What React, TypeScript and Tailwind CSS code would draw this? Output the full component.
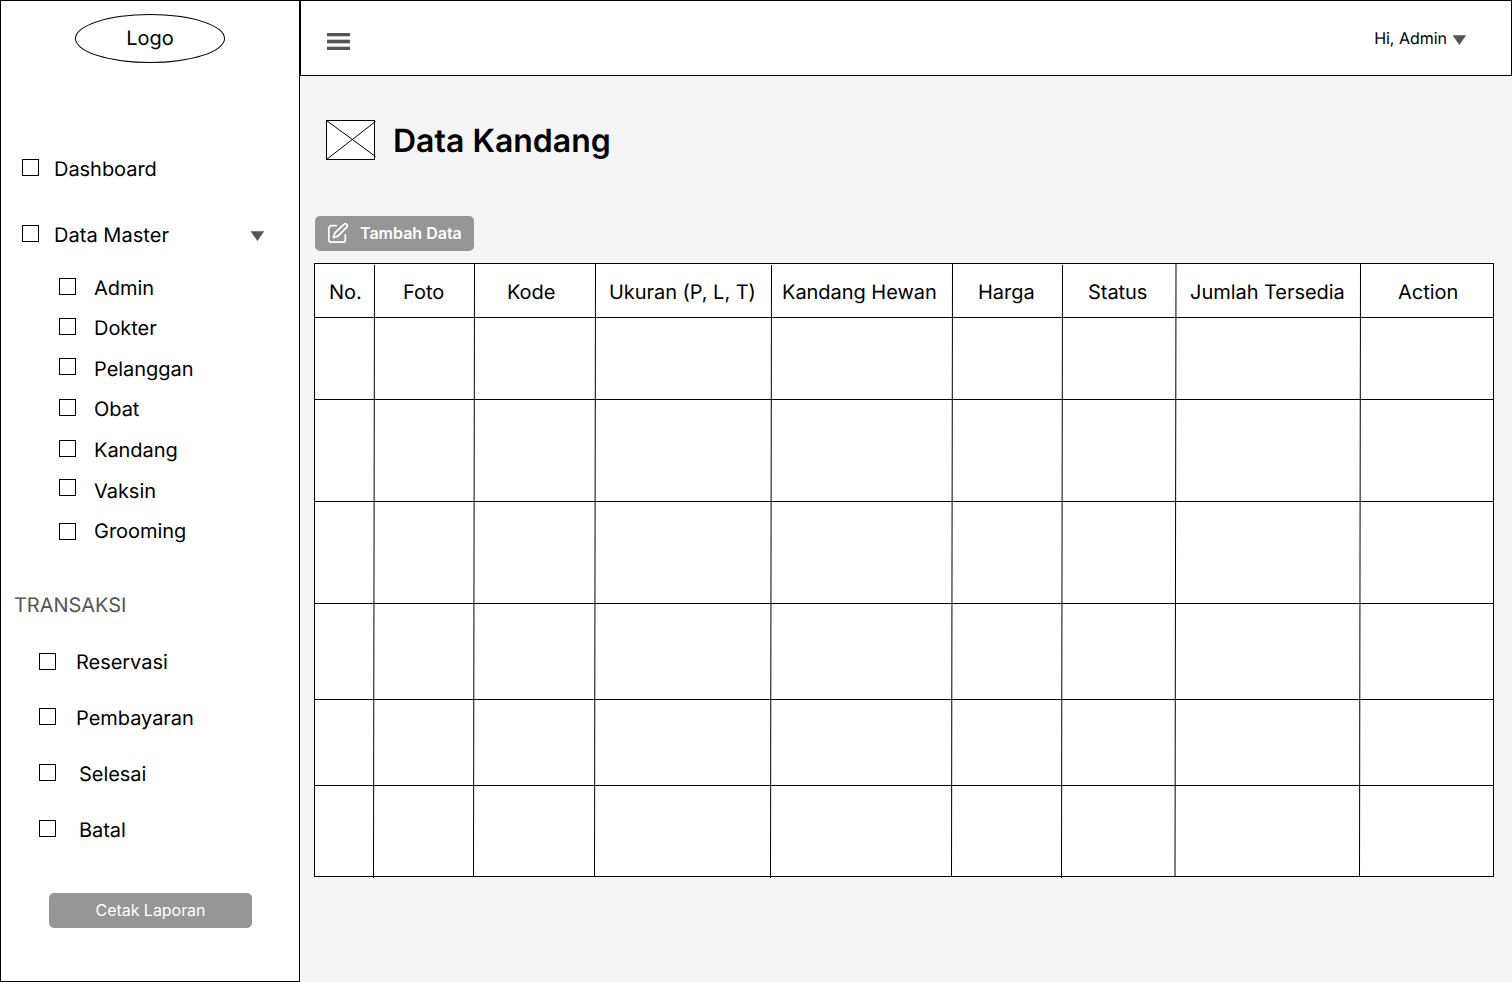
type Item = { label: string; row: string; box: string };

const masterItems: Item[] = [
  { label: "Admin", row: "h-10", box: "mt-0.5" },
  { label: "Dokter", row: "h-[41px]", box: "mt-0.5" },
  { label: "Pelanggan", row: "h-10", box: "mt-px" },
  { label: "Obat", row: "h-[41px]", box: "mt-0.5" },
  { label: "Kandang", row: "h-[41px]", box: "mt-0.5" },
  { label: "Vaksin", row: "h-10", box: "mt-0" },
  { label: "Grooming", row: "h-6", box: "mt-1" },
];

const transactionItems: Item[] = [
  { label: "Reservasi", row: "gap-5", box: "mt-[3px]" },
  { label: "Pembayaran", row: "gap-5", box: "mt-0.5" },
  { label: "Selesai", row: "gap-[23px]", box: "mt-0.5" },
  { label: "Batal", row: "gap-[23px]", box: "mt-0.5" },
];

const columns = [
  { label: "No.", pad: "pl-[14px]" },
  { label: "Foto", pad: "pl-7" },
  { label: "Kode", pad: "pl-8" },
  { label: "Ukuran (P, L, T)", pad: "pl-[13px]" },
  { label: "Kandang Hewan", pad: "pl-2.5" },
  { label: "Harga", pad: "pl-[25px]" },
  { label: "Status", pad: "pl-[25px]" },
  { label: "Jumlah Tersedia", pad: "pl-[13px]" },
  { label: "Action", pad: "pl-[37px]" },
];

const rowHeights = ["h-[82px]", "h-[102px]", "h-[102px]", "h-24", "h-[86px]", "h-[90px]"];

// Hand-drawn column rules: each drifts one pixel left from top to bottom.
const rules = [
  { x: 60.5, y1: 2, y2: 615 },
  { x: 160.5, y1: 1, y2: 614 },
  { x: 281.5, y1: 1, y2: 614 },
  { x: 457.5, y1: 2, y2: 615 },
  { x: 638.5, y1: 1, y2: 614 },
  { x: 748.5, y1: 2, y2: 615 },
  { x: 862, y1: 1, y2: 614 },
  { x: 1046.5, y1: 1, y2: 614 },
];

const grid =
  "grid grid-cols-[60px_100px_121px_176px_181px_110px_114px_184px_132px]";

function Box({ className = "" }: { className?: string }) {
  return <span className={`size-[17px] shrink-0 border border-black bg-white ${className}`} />;
}

function Caret({ className = "" }: { className?: string }) {
  return (
    <svg className={className} width="15" height="10" viewBox="0 0 15 10" aria-hidden="true">
      <path d="M0.6 0.2H14.2L7.4 10Z" fill="#555" />
    </svg>
  );
}

function Sidebar() {
  return (
    <aside className="flex w-[300px] shrink-0 flex-col border border-black bg-white text-[20px] leading-6 tracking-[-0.04px]">
      <div className="mt-[13px] ml-[74px] flex h-[49px] w-[150px] items-center justify-center rounded-[50%] border border-black pb-0.5">
        Logo
      </div>

      <div className="mt-[94px] ml-[21px] flex h-[66px] items-start">
        <Box className="mt-0.5" />
        <span className="ml-[15px]">Dashboard</span>
      </div>
      <div className="ml-[21px] flex h-[53px] items-start">
        <Box className="mt-0.5" />
        <span className="ml-[15px] tracking-[0.04px]">Data Master</span>
        <Caret className="mt-2 mr-[34px] ml-auto" />
      </div>

      <nav className="ml-[58px] flex flex-col">
        {masterItems.map((item) => (
          <div key={item.label} className={`flex items-start gap-[18px] ${item.row}`}>
            <Box className={item.box} />
            <span>{item.label}</span>
          </div>
        ))}
      </nav>

      <h2 className="mt-[50px] ml-[13px] text-[#555]">TRANSAKSI</h2>

      <nav className="mt-[33px] ml-[38px] flex flex-col gap-8">
        {transactionItems.map((item) => (
          <div key={item.label} className={`flex h-6 items-start ${item.row}`}>
            <Box className={item.box} />
            <span>{item.label}</span>
          </div>
        ))}
      </nav>

      <button className="mt-[51px] ml-12 flex h-[35px] w-[203px] items-center justify-center rounded-[5px] bg-[#969696] pb-px text-[16px] text-white">
        Cetak Laporan
      </button>
    </aside>
  );
}

function Header() {
  return (
    <header className="flex h-[76px] items-start border border-black bg-white">
      <svg className="mt-8 ml-[26px]" width="23" height="18" viewBox="0 0 23 18" aria-hidden="true">
        <path d="M0 3H23V4H0ZM0 6H23V7H0ZM0 10H23V11H0ZM0 13H23V14H0Z" fill="#c8c8c8" />
        <path d="M0 0H23V3H0ZM0 7H23V10H0ZM0 14H23V17H0Z" fill="#555" />
      </svg>
      <div className="mt-[27px] mr-11 ml-auto flex items-start text-[16px] leading-5 tracking-[-0.02px]">
        <span>Hi, Admin</span>
        <Caret className="mt-[7px] ml-[5px]" />
      </div>
    </header>
  );
}

function DataTable() {
  return (
    <div className="relative mt-3 ml-[14px] w-[1180px] border border-black bg-white text-[20px] leading-6 tracking-[-0.04px]">
      <div className={`${grid} h-[54px] border-b border-black pt-4`}>
        {columns.map((c) => (
          <div key={c.label} className={`whitespace-nowrap ${c.pad}`}>
            {c.label}
          </div>
        ))}
      </div>
      <div>
        {rowHeights.map((height, i) => (
          <div key={i} className={`${grid} ${height} border-b border-black last:border-b-0`}>
            {columns.map((c) => (
              <div key={c.label} />
            ))}
          </div>
        ))}
      </div>
      <svg
        className="pointer-events-none absolute -top-px -left-px"
        width="1180"
        height="615"
        viewBox="0 0 1180 615"
        aria-hidden="true"
      >
        {rules.map((r) => (
          <line key={r.x} x1={r.x} y1={r.y1} x2={r.x - 1} y2={r.y2} stroke="black" />
        ))}
      </svg>
    </div>
  );
}

export default function App() {
  return (
    <div className="flex h-[982px] w-[1512px] overflow-hidden bg-[#f5f5f5] font-['Inter',sans-serif] text-black [text-rendering:geometricPrecision]">
      <Sidebar />
      <main className="flex w-[1212px] flex-col">
        <Header />
        <div className="mt-11 ml-[26px] flex h-10 items-center">
          <svg width="50" height="40" viewBox="0 0 50 40" aria-hidden="true">
            <rect x="0.5" y="0.5" width="48" height="39" fill="white" stroke="black" />
            <path d="M0.5 0.5L49.5 36.5M0.5 39.5L49.5 1.5" stroke="black" strokeWidth="1" />
          </svg>
          <h1 className="ml-[17px] pt-0.5 text-[32px] leading-10 font-semibold">Data Kandang</h1>
        </div>
        <button className="mt-14 ml-[15px] flex h-[35px] w-[159px] items-center rounded-[5px] bg-[#969696] pb-px pl-3 text-[16px] font-semibold text-white">
          <svg
            width="22"
            height="22"
            viewBox="0 0 24 24"
            fill="none"
            stroke="white"
            strokeWidth="1.9"
            strokeLinecap="round"
            strokeLinejoin="round"
            aria-hidden="true"
          >
            <path d="M10 4H5a3 3 0 0 0-3 3v12a3 3 0 0 0 3 3h12a3 3 0 0 0 3-3v-5" />
            <path d="M18.5 2.5a2.121 2.121 0 0 1 3 3L12 15.5l-5 1.5 1.5-5 10-9.5z" />
          </svg>
          <span className="ml-[11px] whitespace-nowrap">Tambah Data</span>
        </button>
        <DataTable />
      </main>
    </div>
  );
}
